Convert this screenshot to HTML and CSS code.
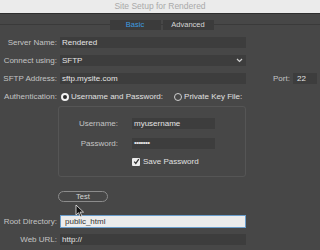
FILE: index.html
```html
<!DOCTYPE html>
<html lang="en">
<head>
    <meta charset="UTF-8">
    <title>Site Setup for Rendered</title>
    <link rel="stylesheet" href="styles.css">
</head>
<body>
    <div class="titlebar">Site Setup for Rendered</div>
    <div class="tabs">
        <span class="tab active">Basic</span>
        <span class="tab">Advanced</span>
    </div>
    <div class="form">
        <div class="row">
            <label class="label">Server Name:</label>
            <div class="field">Rendered</div>
        </div>
        <div class="row">
            <label class="label">Connect using:</label>
            <div class="field select">SFTP
                <svg class="chev" width="7" height="5" viewBox="0 0 7 5"><path d="M1 1l2.5 2.5L6 1" fill="none" stroke="#d0d0d0" stroke-width="1.2"/></svg>
            </div>
        </div>
        <div class="row">
            <label class="label">SFTP Address:</label>
            <div class="field">sftp.mysite.com</div>
            <label class="port-label">Port:</label>
            <div class="field port">22</div>
        </div>
        <div class="row auth">
            <label class="label">Authentication:</label>
            <span class="radio on"></span><span class="opt">Username and Password:</span>
            <span class="radio"></span><span class="opt">Private Key File:</span>
        </div>
        <!-- 用户名密码框 -->
        <div class="creds">
            <div class="row">
                <label class="label small">Username:</label>
                <div class="field short">myusername</div>
            </div>
            <div class="row">
                <label class="label small">Password:</label>
                <div class="field short dots">&bull;&bull;&bull;&bull;&bull;&bull;&bull;</div>
            </div>
            <div class="row check-row">
                <span class="checkbox"><svg width="7" height="7" viewBox="0 0 7 7"><path d="M1.2 3.6l1.6 1.8L5.8 1.2" fill="none" stroke="#333" stroke-width="1.3"/></svg></span>
                <span class="opt">Save Password</span>
            </div>
        </div>
        <div class="test-row"><button class="test">Test</button></div>
        <div class="row root">
            <label class="label">Root Directory:</label>
            <div class="field light">public_html</div>
        </div>
        <div class="row">
            <label class="label">Web URL:</label>
            <div class="field">http://</div>
        </div>
    </div>
    <svg class="cursor" width="10" height="14" viewBox="0 0 10 14"><path d="M1 1v10l2.5-2.3 1.8 4 1.6-.7-1.8-3.9H8.5z" fill="#111" stroke="#eee" stroke-width="0.8"/></svg>
</body>
</html>
```

FILE: styles.css
```css
* {
    margin: 0;
    padding: 0;
    box-sizing: border-box;
}
body {
    width: 320px;
    height: 250px;
    overflow: hidden;
    background: #474747;
    font-family: "Liberation Sans", Arial, sans-serif;
    font-size: 8px;
    color: #c4c4c4;
    position: relative;
}
.titlebar {
    height: 14px;
    line-height: 13px;
    background: #ebebeb;
    border-bottom: 1px solid #2e2e2e;
    color: #a9a9a9;
    text-align: center;
    font-size: 8.5px;
}
/* 标签页，中间有一条横线 */
.tabs {
    margin-top: 6px;
    height: 10px;
    display: flex;
    justify-content: center;
    gap: 2px;
    padding-left: 3px;
    background: linear-gradient(#474747 4px, #3a3a3a 4px, #3a3a3a 5px, #474747 5px);
}
.tab {
    width: 51px;
    background: #3b3b3b;
    text-align: center;
    line-height: 10px;
    color: #d6d6d6;
    font-size: 7.5px;
}
.tab.active {
    color: #3d9be0;
}
.form {
    padding-top: 7px;
}
.row {
    display: flex;
    align-items: center;
    height: 11px;
    margin-bottom: 7px;
}
.label {
    width: 58px;
    padding-right: 1px;
    text-align: right;
    flex-shrink: 0;
}
.field {
    margin-left: 2px;
    width: 186px;
    height: 11px;
    line-height: 11px;
    background: #3d3d3d;
    color: #e4e4e4;
    padding-left: 2px;
    position: relative;
}
.select .chev {
    position: absolute;
    right: 3px;
    top: 3px;
}
.port-label {
    margin-left: 27px;
    width: 18px;
}
.field.port {
    width: 24px;
    margin-left: 2px;
    padding-left: 4px;
}
.row.auth {
    margin-top: 1px;
    margin-bottom: 4px;
}
.radio {
    width: 8px;
    height: 8px;
    border-radius: 50%;
    border: 1px solid #cfcfcf;
    margin-left: 3px;
    margin-right: 2px;
    flex-shrink: 0;
}
.radio.on {
    border: 2.5px solid #f2f2f2;
    background: #2a2a2a;
}
.radio + .opt + .radio {
    margin-left: 11px;
}
.opt {
    color: #e0e0e0;
}
.creds {
    margin-left: 58px;
    width: 188px;
    height: 71px;
    border: 1px solid #555;
    border-radius: 3px;
    padding-top: 11px;
}
.creds .row {
    margin-bottom: 9px;
}
.label.small {
    width: 59px;
    padding-right: 0;
}
.field.short {
    width: 83px;
    margin-left: 14px;
}
.dots {
    font-size: 8px;
    letter-spacing: -0.6px;
    line-height: 10px;
}
.creds .check-row {
    margin-top: -2px;
    padding-left: 73px;
}
.checkbox {
    width: 8px;
    height: 8px;
    background: #ececec;
    border-radius: 1px;
    margin-right: 3px;
    display: flex;
    align-items: center;
    justify-content: center;
}
.test-row {
    padding: 14px 0 0 58px;
    height: 38px;
}
.test {
    width: 50px;
    height: 11px;
    border: 1px solid #8c8c8c;
    border-radius: 6px;
    background: #474747;
    color: #d4d4d4;
    font-family: "Liberation Sans", Arial, sans-serif;
    font-size: 7.5px;
    line-height: 9px;
}
.row.root {
    height: 13px;
    margin-bottom: 6px;
}
.field.light {
    height: 13px;
    line-height: 11px;
    background: #ececec;
    border: 1px solid #6b9ecc;
    color: #333;
    padding-left: 4px;
}
.cursor {
    position: absolute;
    left: 75px;
    top: 204px;
}
```
